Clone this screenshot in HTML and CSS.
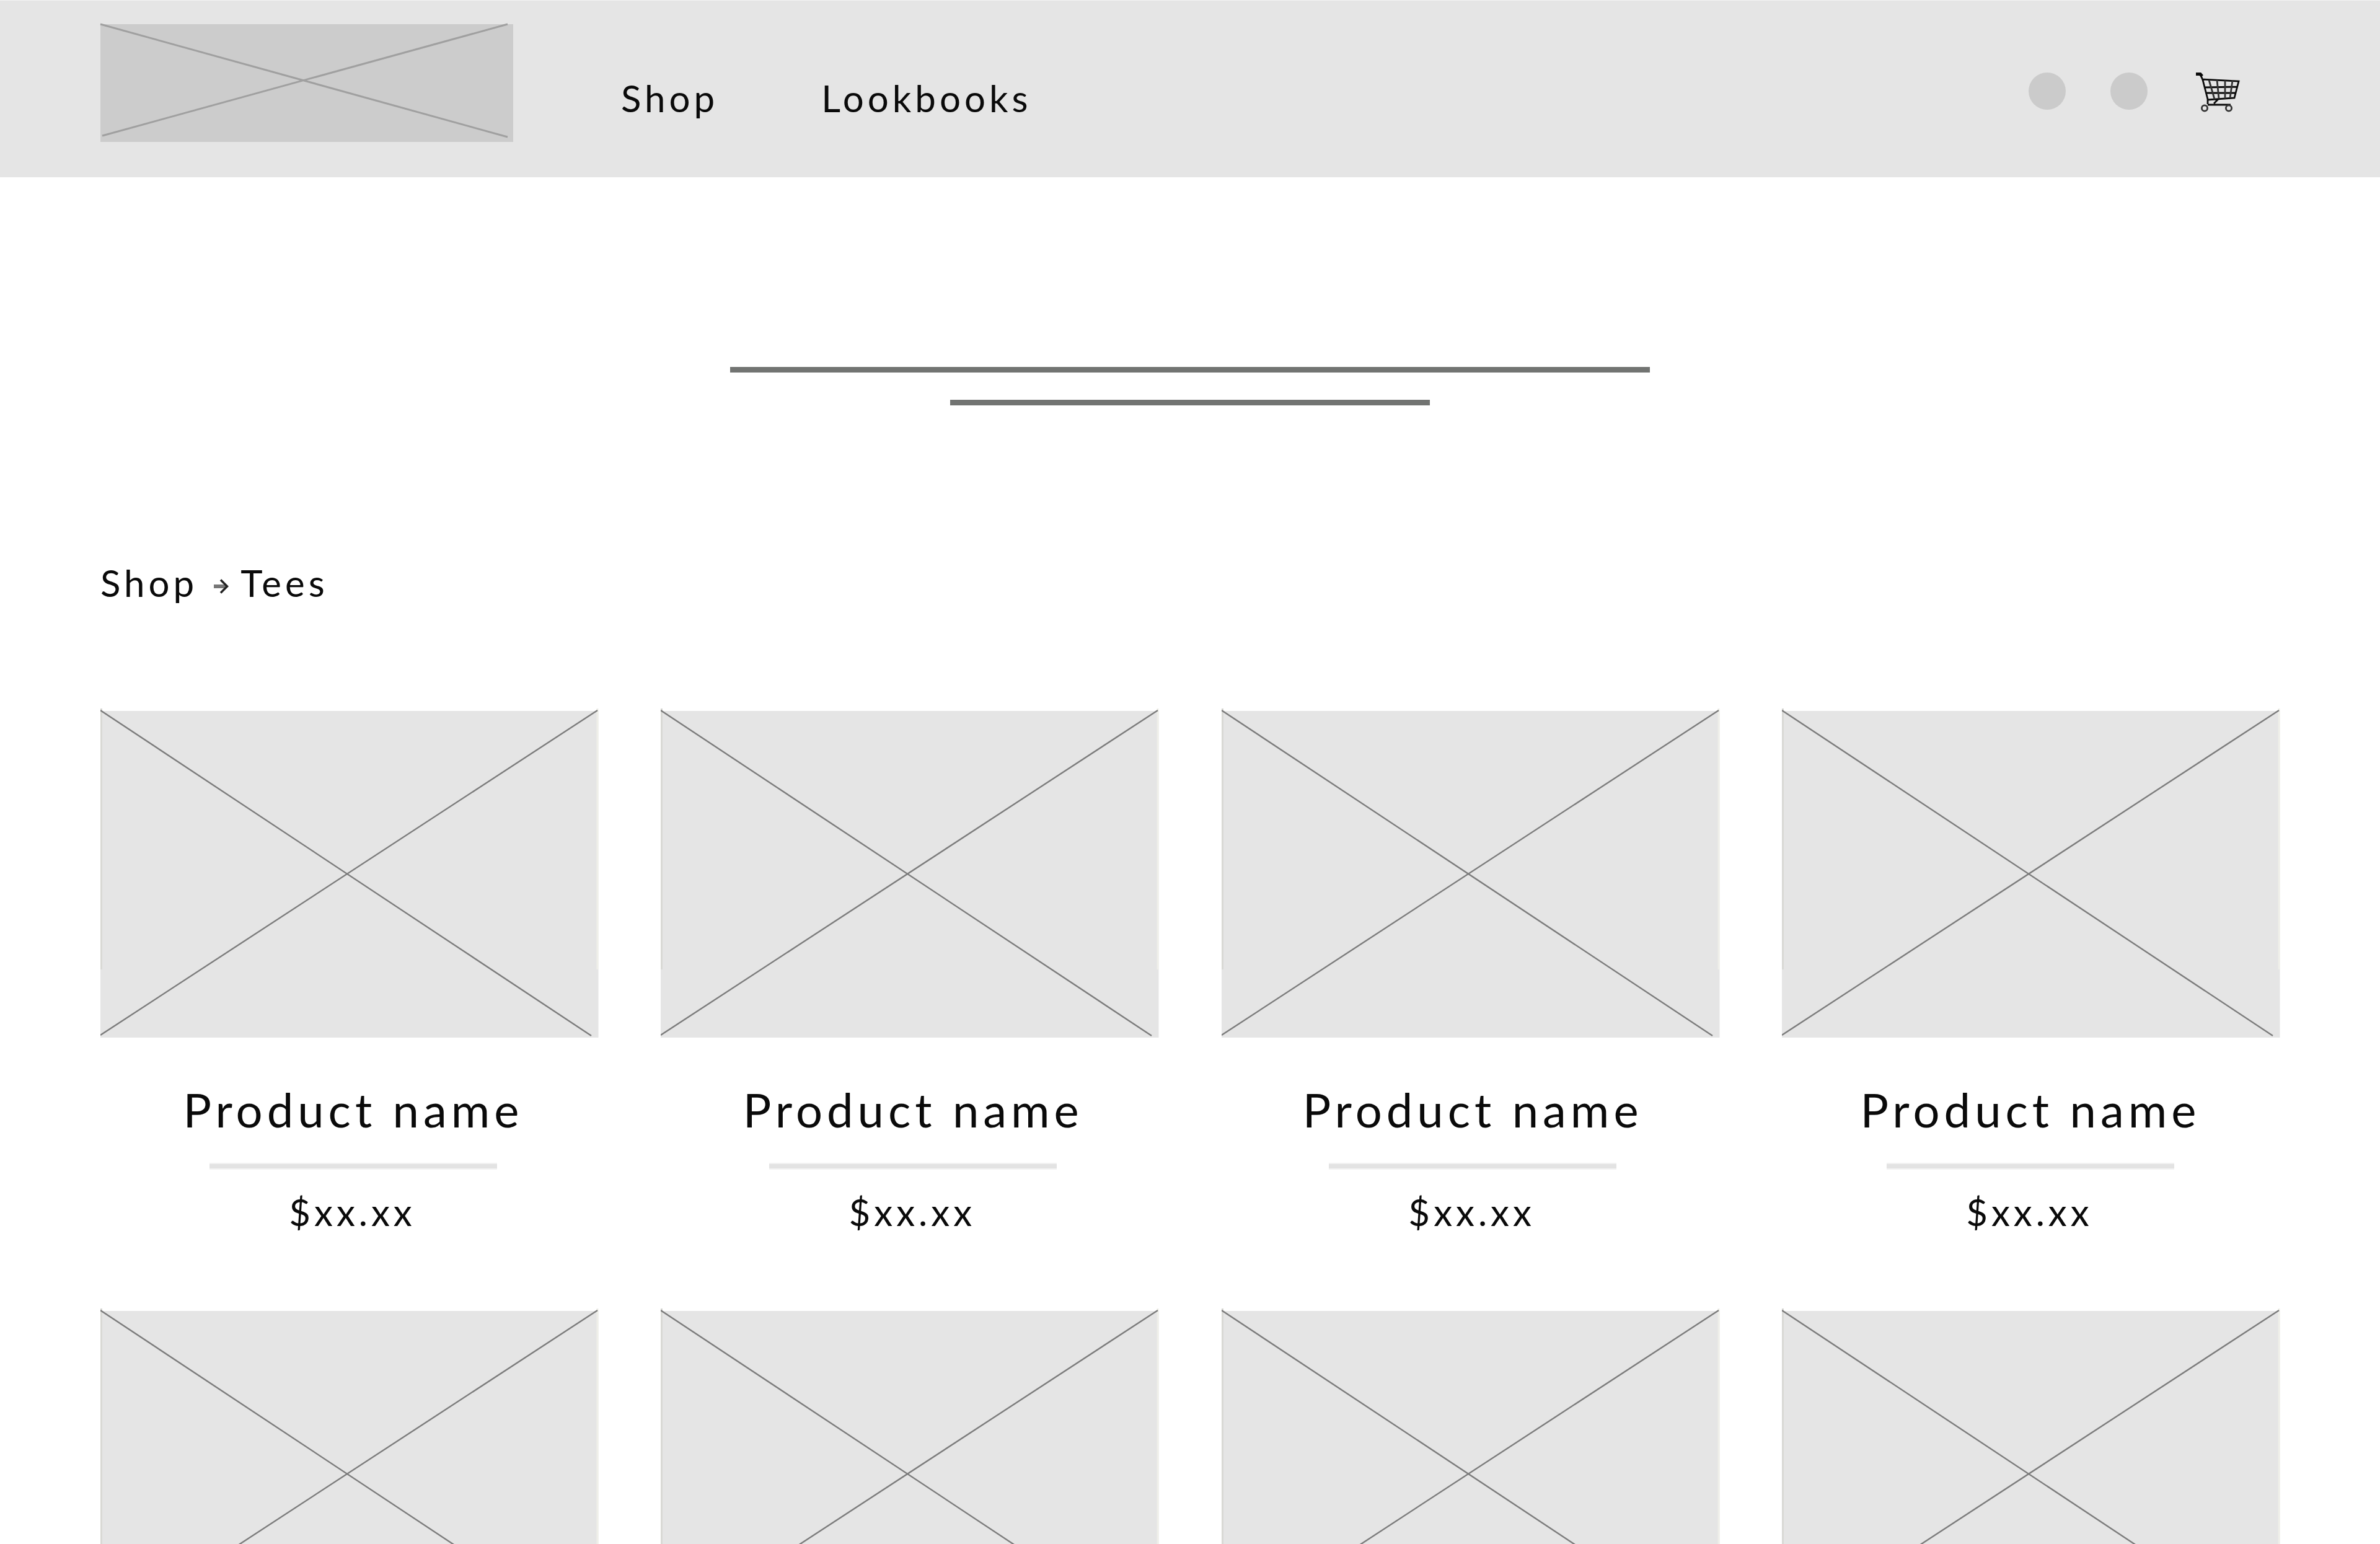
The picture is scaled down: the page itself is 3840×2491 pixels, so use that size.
FILE: index.html
```html
<!DOCTYPE html>
<html lang="en">
<head>
<meta charset="utf-8">
<title>Shop – Tees</title>
<link rel="stylesheet" href="styles.css">
</head>
<body>
<svg width="0" height="0" class="defs" aria-hidden="true">
  <symbol id="placeholder" viewBox="0 0 804 531">
    <rect y="4" width="803.500" height="527" fill="#e5e5e5"/>
    <path d="M1.500 0V421" stroke="#d9d9d5" stroke-width="3"/>
    <path d="M802 0V421" stroke="#efefe9" stroke-width="3"/>
    <path d="M0 3 792 528M802 3 0 527" stroke="#7c7c7c" stroke-width="2.400"/>
  </symbol>
</svg>
<header class="header">
  <a class="logo" href="#"><svg width="666" height="190" viewBox="0 0 666 190"><path d="M0 0 657 182M657 0 3 180" stroke="#a0a0a0" stroke-width="3"/></svg></a>
  <nav class="nav"><a href="#">Shop</a><a href="#">Lookbooks</a></nav>
  <div class="actions">
    <span class="dot"></span>
    <span class="dot"></span>
    <svg class="cart" width="72" height="66" viewBox="0 0 72 66" fill="none" stroke="#0b0b0b" stroke-width="2.800">
      <path d="M1 2.500H8L11 6" stroke-width="5"/>
      <path d="M9 5 12 12 20 43V51M11 11 70 14 63 41 20 44M15 24 68 23M18 33 65 33M20 52H57M30 50 37 43"/>
      <path d="M22 12 31 43M35 12 38 42M48 13V42M60 13 56 41" stroke="#333"/>
      <circle cx="15" cy="57.500" r="4.600" stroke="#333"/>
      <circle cx="54" cy="57.500" r="4.600" stroke="#333"/>
    </svg>
  </div>
</header>
<main class="main">
  <div class="intro"><span class="bar bar-long"></span><span class="bar bar-short"></span></div>
  <div class="crumbs">
    <a href="#">Shop</a>
    <svg class="arrow" width="25" height="26" viewBox="0 0 25 26" fill="none"><path d="M0 13H19" stroke="#777" stroke-width="6"/><path d="M11 2.500 21.500 13 11 23.500" stroke="#222" stroke-width="3.500"/></svg>
    <span>Tees</span>
  </div>
  <section class="grid">
    <article class="card"><svg class="photo"><use href="#placeholder"/></svg><div class="caption"><h2>Product name</h2><hr><p>$xx.xx</p></div></article>
    <article class="card"><svg class="photo"><use href="#placeholder"/></svg><div class="caption"><h2>Product name</h2><hr><p>$xx.xx</p></div></article>
    <article class="card"><svg class="photo"><use href="#placeholder"/></svg><div class="caption"><h2>Product name</h2><hr><p>$xx.xx</p></div></article>
    <article class="card"><svg class="photo"><use href="#placeholder"/></svg><div class="caption"><h2>Product name</h2><hr><p>$xx.xx</p></div></article>
    <article class="card"><svg class="photo"><use href="#placeholder"/></svg></article>
    <article class="card"><svg class="photo"><use href="#placeholder"/></svg></article>
    <article class="card"><svg class="photo"><use href="#placeholder"/></svg></article>
    <article class="card"><svg class="photo"><use href="#placeholder"/></svg></article>
  </section>
</main>
</body>
</html>
```
FILE: styles.css
```css
* { box-sizing: border-box; margin: 0; padding: 0; }

body {
  width: 3840px;
  height: 2491px;
  background: #fff;
  color: #0a0a0a;
  font: 400 60px/72px Lato, "Liberation Sans", sans-serif;
  letter-spacing: 6px;
}

a { color: inherit; text-decoration: none; }
svg { display: block; flex: none; }
.defs { display: none; }

.header {
  display: flex;
  align-items: flex-start;
  height: 286px;
  padding: 38px 226px 0 162px;
  background: #e5e5e5;
  border-top: 1px solid #f2f2f2;
}

.logo { width: 666px; height: 190px; background: #ccc; }
.logo svg { overflow: visible; }

.nav {
  display: flex;
  gap: 166px;
  padding: 83px 0 0 174px;
}

.actions {
  display: flex;
  align-items: flex-start;
  margin-left: auto;
  padding-top: 78px;
}

.dot {
  width: 60px;
  height: 60px;
  margin-right: 72px;
  border-radius: 50%;
  background: #cbcbcb;
}

.dot + .dot { margin-right: 77px; }

.main {
  height: 2205px;
  padding-left: 162px;
  overflow: hidden;
}

.intro {
  display: flex;
  flex-direction: column;
  align-items: center;
  gap: 44px;
  padding: 306px 162px 0 0;
}

.bar { height: 9px; background: #727472; }
.bar-long { width: 1484px; }
.bar-short { width: 774px; }

.crumbs {
  display: flex;
  align-items: center;
  height: 72px;
  margin-top: 250px;
}

.arrow { margin: 12px 18px 0 26px; }

.grid {
  display: grid;
  grid-template-columns: repeat(4, 804px);
  column-gap: 100.300px;
  row-gap: 120px;
  margin-top: 167px;
}

.photo { width: 804px; height: 531px; }

.caption {
  display: flex;
  flex-direction: column;
  align-items: center;
  padding: 70px 0 0 12px;
}

.caption p { margin-right: 3px; }

.card:nth-child(2) .caption { margin-left: -2px; }
.card:nth-child(3) .caption { margin-left: -5px; }
.card:nth-child(4) .caption { margin-left: -14px; }

h2 { font-size: 76px; line-height: 91px; font-weight: 400; letter-spacing: 7px; }

hr {
  width: 464px;
  height: 11px;
  margin: 41px 0 32px;
  border: solid #f2f2f2;
  border-width: 2px 0;
  background: #e3e3e3;
}
```
